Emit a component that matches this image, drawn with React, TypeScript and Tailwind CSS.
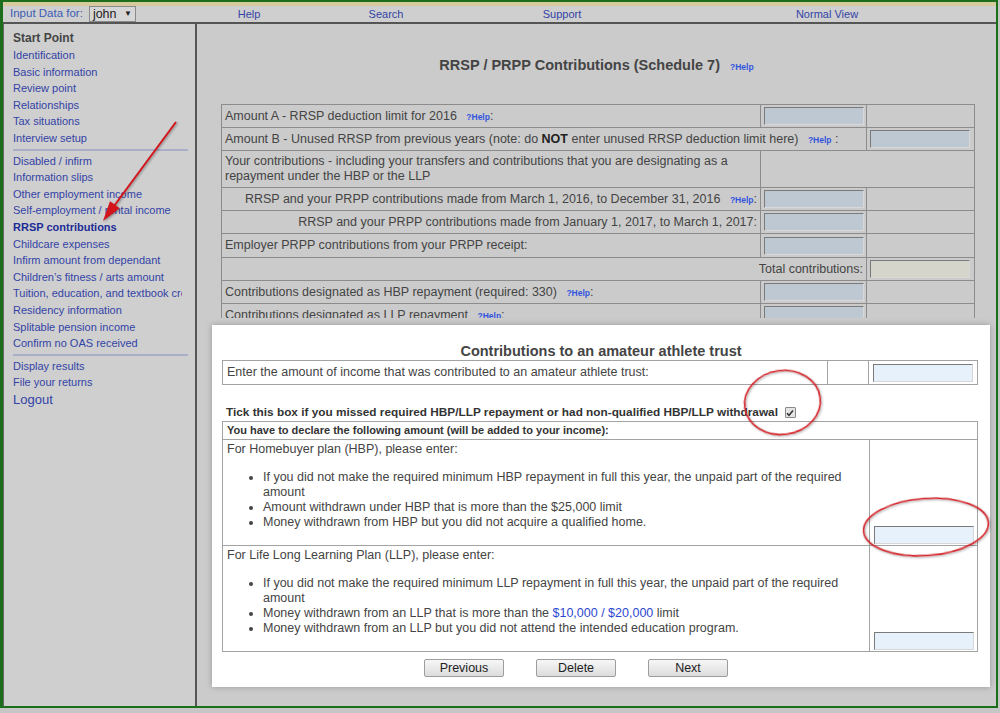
import React from "react";

const link = "text-[#3343a6]";
const cell = "border border-[#8c8c8c] px-[3px] align-middle";
const wcell = "border border-[#a3a3a3] px-[4px]";

function Help() {
  return <span className="ml-[6px] text-[8.5px] font-bold text-[#3355dd]">?Help</span>;
}

function Field({ tone = "gray" }: { tone?: "gray" | "blue" | "off" }) {
  const bg = tone === "blue" ? "bg-[#e6f1fc]" : tone === "off" ? "bg-[#d5d5cb]" : "bg-[#bec8d3]";
  return (
    <input
      readOnly
      className={`block h-[18px] w-[100px] border border-t-[#7a7a7a] border-l-[#7a7a7a] border-r-[#d8d8d8] border-b-[#d8d8d8] ${bg}`}
    />
  );
}

const group1 = ["Identification", "Basic information", "Review point", "Relationships", "Tax situations", "Interview setup"];
const group2 = [
  "Disabled / infirm",
  "Information slips",
  "Other employment income",
  "Self-employment / rental income",
  "RRSP contributions",
  "Childcare expenses",
  "Infirm amount from dependant",
  "Children’s fitness / arts amount",
  "Tuition, education, and textbook credits",
  "Residency information",
  "Splitable pension income",
  "Confirm no OAS received",
];

function Sidebar() {
  return (
    <aside className="w-[194px] shrink-0 border-l border-[#666] border-r-2 border-r-[#555] bg-[#cfcfcf] pl-[9px] pt-[5px]">
      <p className="h-[18px] text-[12px] font-bold leading-[18px] text-[#444]">Start Point</p>
      <div className="w-[169px] overflow-hidden whitespace-nowrap text-[11px] leading-[16.6px]">
        {group1.map((g) => (
          <p key={g} className={link}>{g}</p>
        ))}
      </div>
      <div className="my-[2px] h-[2px] w-[175px] bg-[#a9afc8]" />
      <div className="w-[169px] overflow-hidden whitespace-nowrap text-[11px] leading-[16.6px]">
        {group2.map((g) => (
          <p key={g} className={g === "RRSP contributions" ? "font-bold text-[#1c2c96]" : link}>{g}</p>
        ))}
      </div>
      <div className="my-[2px] h-[2px] w-[175px] bg-[#a9afc8]" />
      <div className="text-[11px] leading-[16.6px]">
        <p className={link}>Display results</p>
        <p className={link}>File your returns</p>
        <p className={`${link} text-[13px] leading-[18px]`}>Logout</p>
      </div>
    </aside>
  );
}

function Header() {
  return (
    <div className="flex h-[18px] items-center border-b-2 border-[#555] bg-[#cfcfcf] text-[11px]">
      <div className="flex w-[185px] items-center pl-[7px]">
        <span className="text-[11.5px] text-[#3b5bb5]">Input Data for:</span>
        <span className="ml-[6px] flex h-[16px] w-[47px] items-center justify-between border border-[#8a8a8a] bg-[#d6d6d6] px-[3px] text-[12.5px] text-[#222]">
          john<span className="text-[8px]">▼</span>
        </span>
      </div>
      <span className={`w-[122px] text-center ${link}`}>Help</span>
      <span className={`w-[152px] text-center ${link}`}>Search</span>
      <span className={`w-[200px] text-center ${link}`}>Support</span>
      <span className={`w-[330px] text-center ${link}`}>Normal View</span>
    </div>
  );
}

function Schedule() {
  return (
    <div className="ml-[24px] h-[214px] w-[756px] overflow-hidden">
      <table className="w-[753px] table-fixed border-collapse text-[12.5px] text-[#444]">
        <colgroup>
          <col className="w-[539px]" />
          <col className="w-[106px]" />
          <col className="w-[108px]" />
        </colgroup>
        <tbody>
          <tr className="h-[23px]">
            <td className={cell}>Amount A - RRSP deduction limit for 2016 <Help />:</td>
            <td className={cell}><Field /></td>
            <td className={cell}></td>
          </tr>
          <tr className="h-[23px]">
            <td className={cell} colSpan={2}>
              Amount B - Unused RRSP from previous years (note: do <b className="text-[#222]">NOT</b> enter unused RRSP deduction limit here) <Help /> :
            </td>
            <td className={cell}><Field /></td>
          </tr>
          <tr className="h-[37px]">
            <td className={`${cell} leading-[15px]`}>
              Your contributions - including your transfers and contributions that you are designating as a repayment under the HBP or the LLP
            </td>
            <td className={cell} colSpan={2}></td>
          </tr>
          <tr className="h-[23px]">
            <td className={`${cell} whitespace-nowrap text-right`}>RRSP and your PRPP contributions made from March 1, 2016, to December 31, 2016 <Help />:</td>
            <td className={cell}><Field /></td>
            <td className={cell}></td>
          </tr>
          <tr className="h-[23px]">
            <td className={`${cell} text-right`}>RRSP and your PRPP contributions made from January 1, 2017, to March 1, 2017:</td>
            <td className={cell}><Field /></td>
            <td className={cell}></td>
          </tr>
          <tr className="h-[24px]">
            <td className={cell}>Employer PRPP contributions from your PRPP receipt:</td>
            <td className={cell}><Field /></td>
            <td className={cell}></td>
          </tr>
          <tr className="h-[23px]">
            <td className={`${cell} text-right`} colSpan={2}>Total contributions:</td>
            <td className={cell}><Field tone="off" /></td>
          </tr>
          <tr className="h-[23px]">
            <td className={cell}>Contributions designated as HBP repayment (required: 330) <Help />:</td>
            <td className={cell}><Field /></td>
            <td className={cell}></td>
          </tr>
          <tr className="h-[23px]">
            <td className={cell}>Contributions designated as LLP repayment <Help />:</td>
            <td className={cell}><Field /></td>
            <td className={cell}></td>
          </tr>
        </tbody>
      </table>
    </div>
  );
}

function Btn({ label }: { label: string }) {
  return (
    <button className="h-[18px] w-[80px] rounded-[2px] border border-[#9d9d9d] bg-gradient-to-b from-[#f7f7f7] to-[#dcdcdc] text-[12.5px] leading-[16px] text-[#222]">
      {label}
    </button>
  );
}

function Plan({ title, items, input }: { title: string; items: React.ReactNode[]; input: boolean }) {
  return (
    <tr className="h-[106px]">
      <td className={`${wcell} align-top pt-[2px] leading-[15px]`}>
        <p>{title}</p>
        <ul className="mt-[13px] list-disc pl-[36px]">
          {items.map((it, i) => (
            <li key={i}>{it}</li>
          ))}
        </ul>
      </td>
      <td className={`${wcell} align-bottom pb-[1px]`}>{input && <Field tone="blue" />}</td>
    </tr>
  );
}

function Panel() {
  return (
    <div className="ml-[15px] mt-[7px] h-[362px] w-[778px] bg-white pl-[10px] pt-[17px] shadow-[0_0_6px_rgba(0,0,0,0.25)]">
      <h3 className="h-[18px] pr-[10px] text-center text-[14.5px] font-bold leading-[18px] text-[#444]">
        Contributions to an amateur athlete trust
      </h3>
      <table className="w-[755px] table-fixed border-collapse text-[12.5px] text-[#444]">
        <colgroup>
          <col className="w-[605px]" />
          <col className="w-[41px]" />
          <col className="w-[109px]" />
        </colgroup>
        <tbody>
          <tr className="h-[24px]">
            <td className={wcell}>Enter the amount of income that was contributed to an amateur athlete trust:</td>
            <td className={wcell}></td>
            <td className={wcell}><Field tone="blue" /></td>
          </tr>
        </tbody>
      </table>
      <div className="mt-[19px] flex h-[17px] items-center pl-[4px] text-[11.8px] font-bold text-[#333]">
        Tick this box if you missed required HBP/LLP repayment or had non-qualified HBP/LLP withdrawal
        <span className="ml-[7px] flex h-[11px] w-[11px] items-center justify-center rounded-[1px] border border-[#8a8a8a] bg-[#e4e4e4]">
          <svg width="8" height="8" viewBox="0 0 8 8">
            <path d="M1 4.2 L3 6.3 L7 1.5" fill="none" stroke="#333" strokeWidth="1.5" />
          </svg>
        </span>
      </div>
      <table className="w-[755px] table-fixed border-collapse text-[12.5px] text-[#444]">
        <colgroup>
          <col className="w-[647px]" />
          <col className="w-[108px]" />
        </colgroup>
        <tbody>
          <tr className="h-[17px]">
            <td className={`${wcell} text-[11px] font-bold text-[#333]`} colSpan={2}>
              You have to declare the following amount (will be added to your income):
            </td>
          </tr>
          <Plan
            title="For Homebuyer plan (HBP), please enter:"
            input
            items={[
              "If you did not make the required minimum HBP repayment in full this year, the unpaid part of the required amount",
              "Amount withdrawn under HBP that is more than the $25,000 limit",
              "Money withdrawn from HBP but you did not acquire a qualified home.",
            ]}
          />
          <Plan
            title="For Life Long Learning Plan (LLP), please enter:"
            input
            items={[
              "If you did not make the required minimum LLP repayment in full this year, the unpaid part of the required amount",
              <>
                Money withdrawn from an LLP that is more than the <span className="text-[#2d48d0]">$10,000 / $20,000</span> limit
              </>,
              "Money withdrawn from an LLP but you did not attend the intended education program.",
            ]}
          />
        </tbody>
      </table>
      <div className="mt-[7px] flex gap-[32px] pl-[202px]">
        <Btn label="Previous" />
        <Btn label="Delete" />
        <Btn label="Next" />
      </div>
    </div>
  );
}

function Marks() {
  return (
    <svg className="pointer-events-none absolute left-0 top-0" width="1000" height="713" viewBox="0 0 1000 713">
      <g style={{ filter: "drop-shadow(1px 1px 1px rgba(0,0,0,0.35))" }}>
        <line x1="176" y1="122" x2="114" y2="206" stroke="#d3141a" strokeWidth="2" />
        <polygon points="103,221 119.7,208.3 110,201.3" fill="#d3141a" />
        <ellipse cx="782.5" cy="402.5" rx="38" ry="32" fill="none" stroke="#d9242a" strokeWidth="1.6" transform="rotate(-8 782.5 402.5)" />
        <ellipse cx="926" cy="527" rx="62.5" ry="28.5" fill="none" stroke="#d9242a" strokeWidth="1.6" transform="rotate(-4 926 527)" />
      </g>
    </svg>
  );
}

export default function App() {
  return (
    <div className="relative h-[713px] w-[1000px] overflow-hidden bg-[#c6c6c6] font-['Liberation_Sans',Arial,sans-serif]">
      <div className="flex h-[708px] w-[998px] flex-col border-b-2 border-l-[3px] border-r-2 border-t-2 border-[#1c6e1c]">
        <div className="h-[4px] bg-[#d5cb9c]" />
        <Header />
        <div className="flex flex-1">
          <Sidebar />
          <main className="flex-1 bg-[#cbcbcb] pt-[32px]">
            <h2 className="h-[18px] text-center text-[14.5px] font-bold leading-[18px] text-[#444]">
              RRSP / PRPP Contributions (Schedule 7) <Help />
            </h2>
            <div className="mt-[30px]">
              <Schedule />
            </div>
            <Panel />
          </main>
        </div>
      </div>
      <Marks />
    </div>
  );
}
